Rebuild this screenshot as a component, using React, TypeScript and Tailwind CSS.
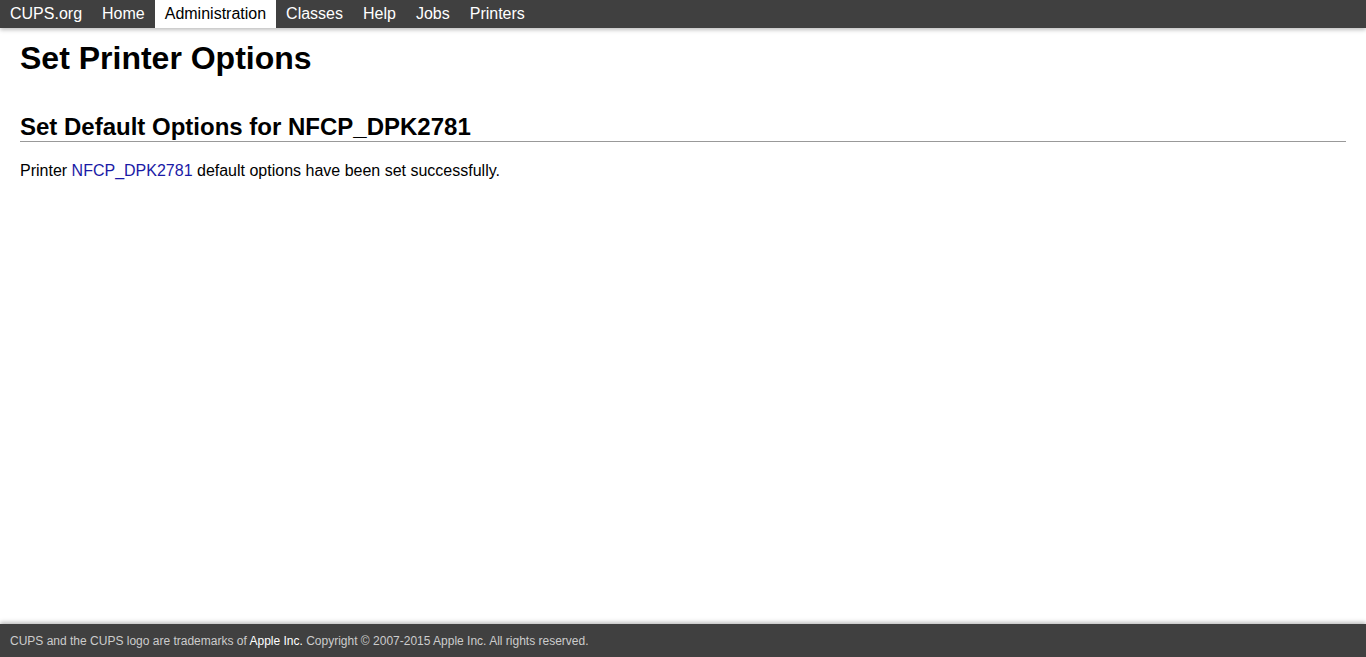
export default function App() {
  const tabs = ["Home", "Administration", "Classes", "Help", "Jobs", "Printers"];
  return (
    <div className="flex flex-col h-screen bg-white text-black" style={{ fontFamily: "'Liberation Sans', Arial, sans-serif" }}>
      {/* Header nav */}
      <div className="flex h-[28px] bg-[#404040] shadow-[0_2px_4px_rgba(0,0,0,0.25)] text-[16px] leading-[28px]">
        <a className="px-[10px] text-white">CUPS.org</a>
        {tabs.map((t) => (
          <a
            key={t}
            className={t === "Administration" ? "px-[10px] bg-white text-black" : "px-[10px] text-white"}
          >
            {t}
          </a>
        ))}
      </div>

      {/* Body */}
      <div className="flex-1 px-[20px]">
        <h1 className="mt-[12px] text-[32px] font-bold leading-[37px]">Set Printer Options</h1>
        <h2 className="mt-[36px] text-[24px] font-bold leading-[28px] border-b border-[#999]">
          Set Default Options for NFCP_DPK2781
        </h2>
        <p className="mt-[20px] text-[16px] leading-[18px]">
          Printer <a className="text-[#1a1aa6]">NFCP_DPK2781</a> default options have been set successfully.
        </p>
      </div>

      {/* Footer */}
      <div className="h-[33px] bg-[#404040] shadow-[0_-2px_4px_rgba(0,0,0,0.25)] px-[10px] pt-[1px] text-[12px] leading-[33px] text-[#ccc]">
        CUPS and the CUPS logo are trademarks of <span className="text-white">Apple Inc.</span> Copyright © 2007-2015 Apple Inc. All rights reserved.
      </div>
    </div>
  );
}
